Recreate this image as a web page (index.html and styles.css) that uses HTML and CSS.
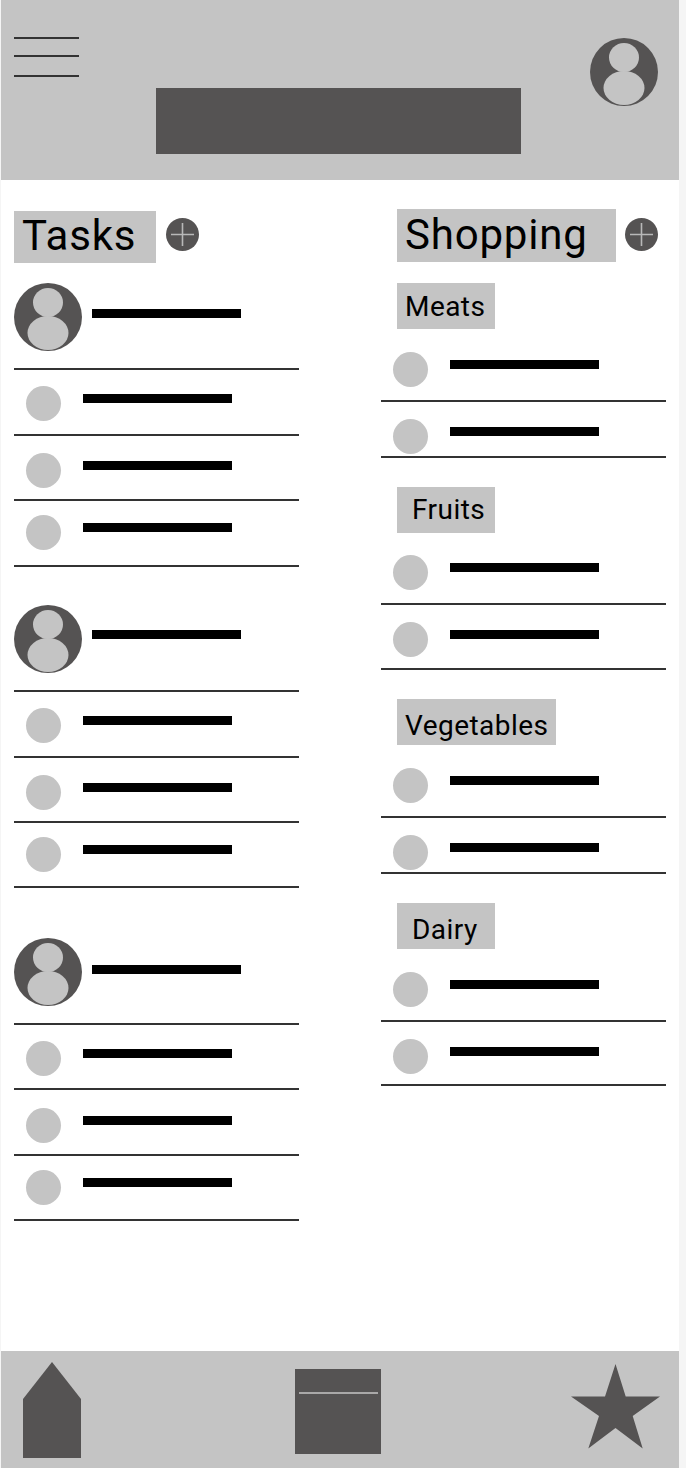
FILE: index.html
```html
<!DOCTYPE html>
<html lang="en">
<head>
<meta charset="utf-8">
<title>Tasks and Shopping wireframe</title>
<link rel="stylesheet" href="styles.css">
</head>
<body>
<svg class="defs" width="0" height="0" aria-hidden="true">
  <defs>
    <clipPath id="avatar-clip"><circle cx="34" cy="34" r="34"/></clipPath>
    <symbol id="avatar" viewBox="0 0 68 68">
      <circle cx="34" cy="34" r="34" fill="#555353"/>
      <ellipse cx="34" cy="19.5" rx="15" ry="14.5" fill="#c4c4c4"/>
      <ellipse cx="34" cy="50" rx="20.5" ry="17" fill="#c4c4c4" clip-path="url(#avatar-clip)"/>
    </symbol>
    <symbol id="plus" viewBox="0 0 33 33">
      <circle cx="16.5" cy="16.5" r="16.5" fill="#555353"/>
      <path d="M16.5 5V28M5 16.5H28" stroke="#b8b8b8" stroke-width="1.6" fill="none"/>
    </symbol>
  </defs>
</svg>
<div class="app">
  <header class="top">
    <div class="menu"><span></span><span></span><span></span></div>
    <div class="title"></div>
    <svg class="top-avatar"><use href="#avatar"/></svg>
  </header>

  <main class="board">
    <section class="col col-tasks">
      <div class="head">
        <h1 class="head-chip tasks-chip">Tasks</h1>
        <svg class="add"><use href="#plus"/></svg>
      </div>

      <div class="group">
        <div class="person"><svg class="avatar"><use href="#avatar"/></svg><div class="bar bar-p26"></div></div>
        <div class="row h66 p15"><i class="dot"></i><b class="bar"></b></div>
        <div class="row h65 p16"><i class="dot"></i><b class="bar"></b></div>
        <div class="row h66 p13"><i class="dot"></i><b class="bar"></b></div>
      </div>
      <div class="group group-2">
        <div class="person"><svg class="avatar"><use href="#avatar"/></svg><div class="bar bar-p25"></div></div>
        <div class="row h66 p15"><i class="dot"></i><b class="bar"></b></div>
        <div class="row h65 p16"><i class="dot"></i><b class="bar"></b></div>
        <div class="row h65 p13"><i class="dot"></i><b class="bar"></b></div>
      </div>
      <div class="group group-3">
        <div class="person"><svg class="avatar"><use href="#avatar"/></svg><div class="bar bar-p27"></div></div>
        <div class="row h65 p15"><i class="dot"></i><b class="bar"></b></div>
        <div class="row h66 p17"><i class="dot"></i><b class="bar"></b></div>
        <div class="row h65 p13"><i class="dot"></i><b class="bar"></b></div>
      </div>
    </section>

    <section class="col col-shopping">
      <div class="head">
        <h1 class="head-chip shopping-chip">Shopping</h1>
        <svg class="add add-shopping"><use href="#plus"/></svg>
      </div>

      <div class="category">
        <h2 class="cat-chip nudge">Meats</h2>
        <div class="row h73 p22"><i class="dot"></i><b class="bar"></b></div>
        <div class="row h56 p16"><i class="dot"></i><b class="bar"></b></div>
      </div>
      <div class="category">
        <h2 class="cat-chip indent">Fruits</h2>
        <div class="row h72 p21"><i class="dot"></i><b class="bar"></b></div>
        <div class="row h65 p16"><i class="dot"></i><b class="bar"></b></div>
      </div>
      <div class="category">
        <h2 class="cat-chip wide low">Vegetables</h2>
        <div class="row h73 p22"><i class="dot"></i><b class="bar"></b></div>
        <div class="row h56 p16"><i class="dot"></i><b class="bar"></b></div>
      </div>
      <div class="category">
        <h2 class="cat-chip indent low">Dairy</h2>
        <div class="row h73 p22"><i class="dot"></i><b class="bar"></b></div>
        <div class="row h64 p16"><i class="dot"></i><b class="bar"></b></div>
      </div>
    </section>
  </main>

  <footer class="nav">
    <svg class="nav-home" viewBox="0 0 58 96"><path d="M29 0L58 37V96H0V37Z" fill="#555353"/></svg>
    <svg class="nav-page" viewBox="0 0 86 85"><rect width="86" height="85" fill="#555353"/><path d="M4 24H83" stroke="#a9a8a8" stroke-width="2"/></svg>
    <svg class="nav-star" viewBox="0 0 89 85"><path d="M44.500 0L54.700 32.500H89L61.700 52L71.700 84.500L44.500 64L17.300 84.500L28 52L0 32.500H34Z" fill="#555353"/></svg>
  </footer>
</div>
</body>
</html>
```

FILE: styles.css
```css
* { box-sizing: border-box; margin: 0; padding: 0; }
html, body { height: 100%; }
body { background: #f5f5f5; font-family: Roboto, "Liberation Sans", sans-serif; color: #000; overflow: hidden; }
.defs { display: block; height: 0; }

.app { width: 678px; height: 1468px; margin-left: 1px; background: #fff; display: flex; flex-direction: column; }

.top { height: 180px; flex: none; background: #c4c4c4; display: flex; align-items: flex-start; padding-left: 13px; }
.menu { width: 65px; margin-top: 36.5px; display: flex; flex-direction: column; }
.menu span { display: block; height: 2px; background: #333; margin-bottom: 16.5px; }
.menu span:nth-child(2) { margin-bottom: 18px; }
.title { width: 365px; height: 66px; margin: 88px 0 0 77px; background: #555353; }
.top-avatar { width: 68px; height: 68px; margin: 38px 0 0 69px; }

.board { flex: 1; display: flex; align-items: flex-start; padding-left: 13px; }
.col { width: 285px; flex: none; }
.col-tasks { padding-top: 31px; }
.col-shopping { margin-left: 82px; padding-top: 29px; }

.head { display: flex; align-items: flex-start; }
.head-chip { background: #c4c4c4; font-size: 42px; font-weight: 400; letter-spacing: 0.8px; padding-left: 8px; }
.tasks-chip { width: 142px; height: 52px; line-height: 50px; }
.shopping-chip { width: 219px; height: 53px; margin-left: 16px; line-height: 52px; }
.add { width: 33px; height: 33px; margin: 7px 0 0 10px; }
.add-shopping { margin: 9px 0 0 9px; }

.group-2 { margin-top: 38px; }
.group-3 { margin-top: 50px; }
.head + .group { margin-top: 20px; }

.person { height: 87px; display: flex; align-items: flex-start; border-bottom: 2px solid #333; }
.avatar { width: 68px; height: 68px; flex: none; }
.person .bar { margin-left: 10px; }
.person .bar.bar-p25 { margin-top: 25px; }
.person .bar.bar-p26 { margin-top: 26px; }
.person .bar.bar-p27 { margin-top: 27px; }

.row { display: flex; align-items: flex-start; border-bottom: 2px solid #333; }
.dot { display: block; width: 35px; height: 35px; flex: none; border-radius: 50%; background: #c4c4c4; margin-left: 12px; }
.bar { display: block; width: 149px; height: 9px; flex: none; background: #000; margin: 8.5px 0 0 22px; }

.h56 { height: 56px; } .h64 { height: 64px; } .h65 { height: 65px; } .h66 { height: 66px; }
.h72 { height: 72px; } .h73 { height: 73px; }
.p13 { padding-top: 13.5px; } .p15 { padding-top: 15.5px; } .p16 { padding-top: 16.5px; }
.p17 { padding-top: 17.5px; } .p21 { padding-top: 21.5px; } .p22 { padding-top: 22.5px; }

.category { margin-top: 29px; }
.head + .category { margin-top: 21px; }
.cat-chip { width: 98px; height: 46px; margin-left: 16px; padding-left: 8px; background: #c4c4c4; font-size: 28px; font-weight: 400; letter-spacing: 0.45px; line-height: 46px; }
.nudge { line-height: 48px; }
.low { line-height: 54px; }
.indent { padding-left: 15px; }
.wide { width: 159px; }

.nav { height: 117px; flex: none; background: #c4c4c4; display: flex; align-items: flex-start; padding-left: 22px; }
.nav-home { width: 58px; height: 96px; margin-top: 11px; flex: none; }
.nav-page { width: 86px; height: 85px; margin: 18px 0 0 214px; flex: none; }
.nav-star { width: 89px; height: 85px; margin: 12.5px 0 0 190px; flex: none; }
```
